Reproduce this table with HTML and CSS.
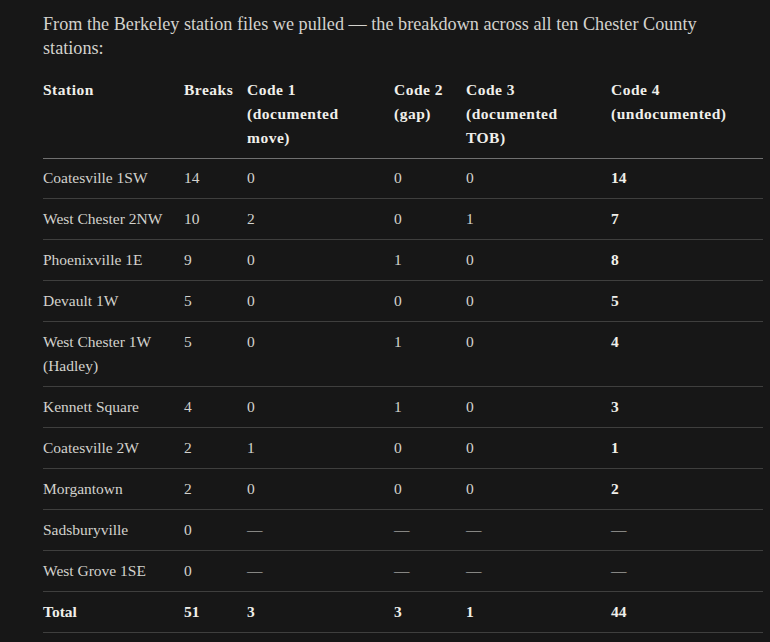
FILE: index.html
```html
<!DOCTYPE html>
<html lang="en">
<head>
<meta charset="utf-8">
<title>Chester County station breakdown</title>
<link rel="stylesheet" href="styles.css">
</head>
<body>
<main class="content">
  <p class="intro">From the Berkeley station files we pulled — the breakdown across all ten Chester County stations:</p>
  <table class="breaks">
    <colgroup>
      <col class="c-station">
      <col class="c-breaks">
      <col class="c-code1">
      <col class="c-code2">
      <col class="c-code3">
      <col class="c-code4">
    </colgroup>
    <thead>
      <tr>
        <th>Station</th>
        <th>Breaks</th>
        <th>Code 1 (documented move)</th>
        <th>Code 2 (gap)</th>
        <th>Code 3 (documented TOB)</th>
        <th>Code 4 (undocumented)</th>
      </tr>
    </thead>
    <tbody>
      <tr><td>Coatesville 1SW</td><td>14</td><td>0</td><td>0</td><td>0</td><td class="strong">14</td></tr>
      <tr><td>West Chester 2NW</td><td>10</td><td>2</td><td>0</td><td>1</td><td class="strong">7</td></tr>
      <tr><td>Phoenixville 1E</td><td>9</td><td>0</td><td>1</td><td>0</td><td class="strong">8</td></tr>
      <tr><td>Devault 1W</td><td>5</td><td>0</td><td>0</td><td>0</td><td class="strong">5</td></tr>
      <tr><td>West Chester 1W (Hadley)</td><td>5</td><td>0</td><td>1</td><td>0</td><td class="strong">4</td></tr>
      <tr><td>Kennett Square</td><td>4</td><td>0</td><td>1</td><td>0</td><td class="strong">3</td></tr>
      <tr><td>Coatesville 2W</td><td>2</td><td>1</td><td>0</td><td>0</td><td class="strong">1</td></tr>
      <tr><td>Morgantown</td><td>2</td><td>0</td><td>0</td><td>0</td><td class="strong">2</td></tr>
      <tr><td>Sadsburyville</td><td>0</td><td>—</td><td>—</td><td>—</td><td>—</td></tr>
      <tr><td>West Grove 1SE</td><td>0</td><td>—</td><td>—</td><td>—</td><td>—</td></tr>
      <tr class="total"><td>Total</td><td>51</td><td>3</td><td>3</td><td>1</td><td>44</td></tr>
    </tbody>
  </table>
</main>
</body>
</html>
```
FILE: styles.css
```css
html, body {
  margin: 0;
  padding: 0;
  background: #171717;
}

body {
  color: #d3d2cd;
  font-family: "Liberation Serif", "DejaVu Serif", serif;
}

.content {
  padding: 12px 7px 0 43px;
}

.intro {
  margin: 0 0 10px 0;
  font-size: 18.2px;
  line-height: 24px;
  max-width: 680px;
}

.breaks {
  border-collapse: collapse;
  table-layout: fixed;
  width: 720px;
  font-size: 15.5px;
  line-height: 24px;
}

.c-station { width: 141px; }
.c-breaks { width: 63px; }
.c-code1 { width: 147px; }
.c-code2 { width: 72px; }
.c-code3 { width: 145px; }
.c-code4 { width: 152px; }

.breaks th,
.breaks td {
  text-align: left;
  vertical-align: top;
  padding: 8px 14px 8px 0;
}

.breaks th {
  font-weight: bold;
  letter-spacing: 0.5px;
  color: #f0efea;
  border-bottom: 1px solid #707070;
}

.breaks td {
  border-bottom: 1px solid #3f3f3e;
}

.breaks tbody tr:first-child td {
  padding-top: 7px;
}

.breaks .strong,
.breaks .total td {
  font-weight: bold;
  color: #f0efea;
}
```
